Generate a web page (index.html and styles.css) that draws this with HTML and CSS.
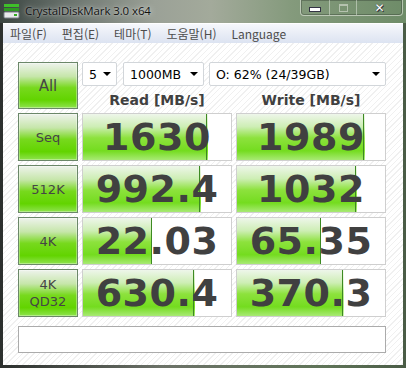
FILE: index.html
```html
<!DOCTYPE html>
<html lang="ko">
<head>
    <meta charset="UTF-8">
    <title>CrystalDiskMark 3.0 x64</title>
    <link rel="stylesheet" href="styles.css">
</head>
<body>

    <div class="window">
        <div class="titlebar">
            <svg class="app-icon" width="17" height="16" viewBox="0 0 17 16">
                <rect x="1" y="1" width="15" height="3" fill="#3fbf2a"/>
                <rect x="1" y="5" width="15" height="3" fill="#2e9a22"/>
                <rect x="1" y="9" width="15" height="6" rx="1" fill="#e8eaec" stroke="#7a8088"/>
                <rect x="11" y="11" width="3" height="2" fill="#33aa22"/>
            </svg>
            <span class="title">CrystalDiskMark 3.0 x64</span>
            <div class="caption">
                <span class="cap cap-min"><i></i></span>
                <span class="cap cap-max"><i></i></span>
                <span class="cap cap-close">✕</span>
            </div>
        </div>

        <div class="client">
            <div class="menubar">
                <span>파일(F)</span>
                <span>편집(E)</span>
                <span>테마(T)</span>
                <span>도움말(H)</span>
                <span>Language</span>
            </div>

            <div class="bench">
                <div class="btn btn-all">All</div>
                <div class="options">
                    <div class="select sel-count">5<b></b></div>
                    <div class="select sel-size">1000MB<b></b></div>
                    <div class="select sel-drive">O: 62% (24/39GB)<b></b></div>
                </div>
                <div class="head">Read [MB/s]</div>
                <div class="head">Write [MB/s]</div>

                <div class="btn">Seq</div>
                <div class="result" style="--fill: 84.5%">1630</div>
                <div class="result" style="--fill: 86.4%">1989</div>

                <div class="btn">512K</div>
                <div class="result" style="--fill: 79.7%">992.4</div>
                <div class="result" style="--fill: 81%">1032</div>

                <div class="btn">4K</div>
                <div class="result" style="--fill: 46.6%">22.03</div>
                <div class="result" style="--fill: 57%">65.35</div>

                <div class="btn btn-two">4K<br>QD32</div>
                <div class="result" style="--fill: 75.7%">630.4</div>
                <div class="result" style="--fill: 72%">370.3</div>

                <div class="status"></div>
            </div>
        </div>
    </div>

</body>
</html>
```

FILE: styles.css
```css
body {
    margin: 0;
    background: #222;
}
.window {
    width: 406px;
    height: 368px;
    box-sizing: border-box;
    padding: 0 3px 3px 3px;
    display: flex;
    flex-direction: column;
    background: linear-gradient(to right, #2c302e, #6c7268 40%, #5f7458 80%, #4a5c46);
    font-family: "DejaVu Sans", sans-serif;
}
.titlebar {
    height: 23px;
    display: flex;
    align-items: flex-start;
    margin: 0 -3px;
    padding-left: 3px;
    background: linear-gradient(to right, #3b4541 0%, #6d7670 18%, #9ba197 38%, #a3aa9b 52%, #849a7c 72%, #6e8c68 100%);
}
.app-icon {
    margin-top: 3px;
}
.title {
    margin-left: 5px;
    margin-top: 3px;
    font-family: "Open Sans", sans-serif;
    font-size: 11.5px;
    letter-spacing: -0.1px;
    color: #111;
    text-shadow: 0 0 6px rgba(255, 255, 255, 0.7), 0 0 2px rgba(255, 255, 255, 0.5);
}
.caption {
    margin-left: auto;
    margin-right: 3px;
    display: flex;
    height: 15px;
    border: 1px solid rgba(230, 235, 225, 0.6);
    border-top: none;
    border-radius: 0 0 4px 4px;
    box-shadow: inset 0 0 0 1px rgba(40, 50, 40, 0.35);
}
.cap {
    display: flex;
    align-items: center;
    justify-content: center;
    border-left: 1px solid rgba(230, 235, 225, 0.5);
}
.cap:first-child {
    border-left: none;
}
.cap-min {
    width: 28px;
}
.cap-min i {
    width: 10px;
    height: 3px;
    margin-top: 4px;
    background: #fff;
    border: 1px solid #334;
}
.cap-max {
    width: 26px;
}
.cap-max i {
    width: 7px;
    height: 5px;
    border: 1px solid rgba(220, 225, 215, 0.6);
    border-top-width: 2px;
}
.cap-close {
    width: 45px;
    color: #fff;
    font-size: 12px;
    font-weight: bold;
    text-shadow: 0 0 1px #223, 1px 1px 0 #334;
}
.client {
    flex: 1;
    display: flex;
    flex-direction: column;
    background-color: #fff;
    background-image: repeating-linear-gradient(135deg, #fff 0, #fff 3px, #f0f0f0 3px, #f0f0f0 4px);
}
.menubar {
    height: 20px;
    box-sizing: border-box;
    padding-left: 7px;
    display: flex;
    gap: 15px;
    align-items: center;
    border-top: 1px solid #fff;
    background: linear-gradient(#f6f8fc, #e9edf6 50%, #dce3f1);
    font-family: "Noto Sans CJK KR", sans-serif;
    font-size: 12px;
    color: #4d4d4d;
}
.bench {
    display: grid;
    grid-template-columns: 60px 150px 150px;
    grid-template-rows: 24px 19px 48px 48px 48px 48px auto;
    column-gap: 4px;
    row-gap: 4px;
    padding: 19px 0 0 15px;
}
.btn {
    box-sizing: border-box;
    border: 1px solid #6b8769;
    background: linear-gradient(#eef3ec 0%, #c6e6aa 30%, #77d91d 55%, #62d400 82%, #8fe34f 100%);
    box-shadow: inset 0 0 0 1px rgba(255, 255, 255, 0.35);
    display: flex;
    align-items: center;
    justify-content: center;
    text-align: center;
    font-size: 13px;
    color: #454545;
}
.btn-all {
    grid-row: span 2;
    font-size: 15px;
}
.btn-two {
    line-height: 17px;
}
.options {
    grid-column: span 2;
    display: flex;
    gap: 5px;
}
.select {
    box-sizing: border-box;
    height: 24px;
    display: flex;
    align-items: center;
    padding-left: 6px;
    background: #fff;
    border: 1px solid #d2d6da;
    border-radius: 2px;
    font-size: 12.5px;
    color: #000;
}
.select b {
    margin-left: auto;
    margin-right: 5px;
    border-left: 4px solid transparent;
    border-right: 4px solid transparent;
    border-top: 4px solid #000;
}
.sel-count {
    width: 35px;
}
.sel-size {
    width: 81px;
    margin-left: 1px;
}
.sel-drive {
    flex: 1;
}
.head {
    display: flex;
    align-items: center;
    justify-content: center;
    font-size: 14px;
    font-weight: bold;
    color: #404040;
}
.result {
    box-sizing: border-box;
    border: 1px solid #cfcfcf;
    background-color: #fff;
    background-image:
        linear-gradient(#3d8a22, #3d8a22),
        linear-gradient(#eef6ea 0%, #cdeeb4 28%, #8de23d 52%, #74dc1f 80%, #a8ea74 100%);
    background-size: 1px 100%, var(--fill) 100%;
    background-position: calc(var(--fill) - 1px) 0, 0 0;
    background-repeat: no-repeat;
    display: flex;
    align-items: center;
    justify-content: center;
    font-size: 38px;
    font-weight: bold;
    color: #404040;
    letter-spacing: 0.5px;
}
.status {
    grid-column: span 3;
    height: 27px;
    margin-top: 5px;
    box-sizing: border-box;
    border: 1px solid #ababab;
    background: #fff;
}
```
